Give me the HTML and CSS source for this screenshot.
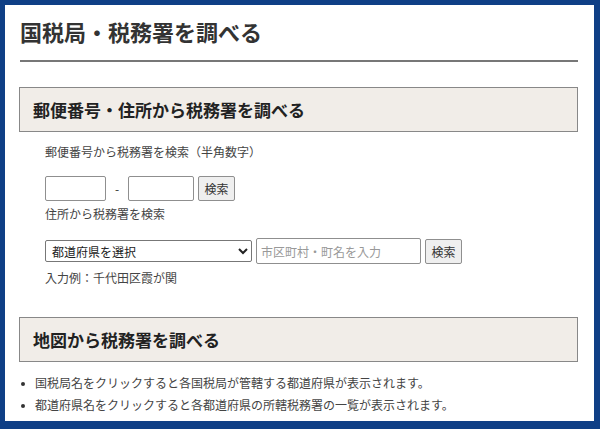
FILE: index.html
```html
<!DOCTYPE html>
<html lang="ja">
<head>
    <meta charset="UTF-8">
    <meta name="viewport" content="width=device-width, initial-scale=1.0">
    <title>国税局・税務署を調べる</title>
    <link rel="stylesheet" href="styles.css">
</head>
<body>
    <div class="frame">
        <h1 class="page-title">国税局・税務署を調べる</h1>

        <h2 class="section-title">郵便番号・住所から税務署を調べる</h2>
        <div class="search">
            <p class="label">郵便番号から税務署を検索（半角数字）</p>
            <div class="row">
                <input type="text" class="zip zip-first">
                <span class="dash">-</span>
                <input type="text" class="zip zip-second">
                <button class="btn">検索</button>
            </div>
            <p class="label label-address">住所から税務署を検索</p>
            <div class="row row-address">
                <select class="pref">
                    <option>都道府県を選択</option>
                </select>
                <input type="text" class="city" placeholder="市区町村・町名を入力">
                <button class="btn">検索</button>
            </div>
            <p class="label label-example">入力例：千代田区霞が関</p>
        </div>

        <h2 class="section-title section-map">地図から税務署を調べる</h2>
        <ul class="notes">
            <li>国税局名をクリックすると各国税局が管轄する都道府県が表示されます。</li>
            <li>都道府県名をクリックすると各都道府県の所轄税務署の一覧が表示されます。</li>
        </ul>
    </div>
</body>
</html>
```

FILE: styles.css
```css
body {
    margin: 0;
    padding: 0;
    font-family: "Noto Sans CJK JP", "Noto Sans", sans-serif;
    color: #333;
    background-color: #fff;
}
.frame {
    height: 429px;
    box-sizing: border-box;
    border-style: solid;
    border-color: #0f3f86;
    border-width: 5px 6px 8px 5px;
    padding: 0 16px 0 14px;
    overflow: hidden;
}
.page-title {
    margin: 11px 0 0 1px;
    padding-bottom: 14px;
    font-size: 22px;
    line-height: 30px;
    font-weight: bold;
    color: #333;
    border-bottom: 2px solid #777;
}
.section-title {
    margin: 25px 0 0 0;
    padding-left: 13px;
    font-size: 17px;
    line-height: 43px;
    font-weight: bold;
    color: #222;
    background-color: #f1ede8;
    border: 1px solid #888;
}
.section-map {
    margin-top: 30px;
}
.search {
    padding-left: 26px;
}
.label {
    margin: 11px 0 0 0;
    font-size: 12px;
    line-height: 18px;
    color: #444;
}
.label-address { margin-top: 4px; }
.label-example { margin-top: 5px; }
.row {
    display: flex;
    align-items: center;
    margin-top: 15px;
    height: 25px;
}
.row-address { height: 26px; }
.zip {
    box-sizing: border-box;
    height: 25px;
    padding: 0 4px;
    border: 1px solid #8f8f8f;
    border-radius: 2px;
    font: inherit;
}
.zip-first { width: 61px; }
.zip-second { width: 66px; }
.dash {
    width: 22px;
    text-align: center;
    font-size: 12px;
}
.btn {
    box-sizing: border-box;
    width: 37px;
    height: 25px;
    margin-left: 4px;
    padding: 0;
    font-family: inherit;
    font-size: 12px;
    color: #333;
    background-color: #efefef;
    border: 1px solid #8f8f8f;
    border-radius: 2px;
}
.pref {
    box-sizing: border-box;
    width: 207px;
    height: 22px;
    padding: 0 2px;
    font-family: inherit;
    font-size: 12px;
    color: #222;
    background-color: #fff;
    border: 1px solid #777;
    border-radius: 2px;
}
.city {
    box-sizing: border-box;
    width: 165px;
    height: 26px;
    margin-left: 4px;
    padding: 0 4px;
    font-family: inherit;
    font-size: 12px;
    border: 1px solid #8f8f8f;
    border-radius: 2px;
}
.city::placeholder { color: #999; }
.notes {
    list-style: none;
    margin: 10px 0 0 0;
    padding: 0;
}
.notes li {
    position: relative;
    padding-left: 16px;
    font-size: 12px;
    line-height: 22px;
    color: #444;
}
.notes li::before {
    content: "";
    position: absolute;
    left: 2px;
    top: 10px;
    width: 4px;
    height: 4px;
    border-radius: 50%;
    background-color: #333;
}
```
